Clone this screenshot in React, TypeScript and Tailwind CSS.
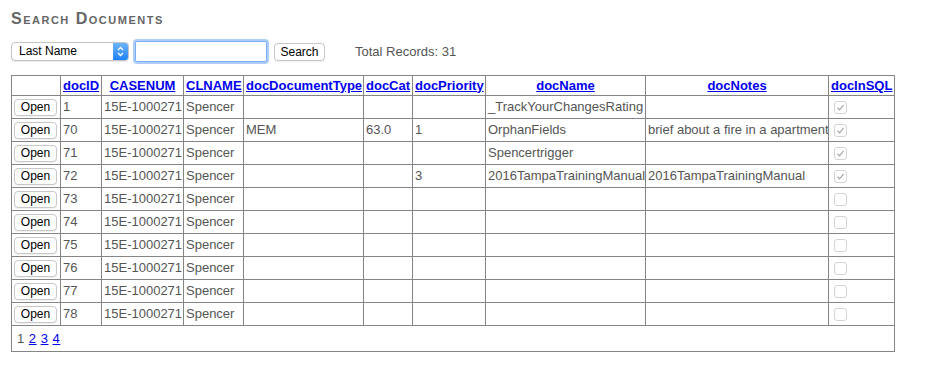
import React from "react";

type Row = {
  id: string;
  type?: string;
  cat?: string;
  pri?: string;
  name?: string;
  notes?: string;
  sql: boolean;
};

const rows: Row[] = [
  { id: "1", name: "_TrackYourChangesRating", sql: true },
  { id: "70", type: "MEM", cat: "63.0", pri: "1", name: "OrphanFields", notes: "brief about a fire in a apartment", sql: true },
  { id: "71", name: "Spencertrigger", sql: true },
  { id: "72", pri: "3", name: "2016TampaTrainingManual", notes: "2016TampaTrainingManual", sql: true },
  { id: "73", sql: false },
  { id: "74", sql: false },
  { id: "75", sql: false },
  { id: "76", sql: false },
  { id: "77", sql: false },
  { id: "78", sql: false },
];

const headers = [
  "docID",
  "CASENUM",
  "CLNAME",
  "docDocumentType",
  "docCat",
  "docPriority",
  "docName",
  "docNotes",
  "docInSQL",
];

const widths = [49, 41, 82, 60, 120, 49, 73, 160, 183, 66];

function CheckBox({ checked }: { checked: boolean }) {
  return (
    <span className="inline-flex w-[13px] h-[13px] rounded-[3px] border border-[#d4d4d4] bg-white items-center justify-center align-middle">
      {checked && (
        <svg width="9" height="9" viewBox="0 0 9 9">
          <path d="M1.5 4.8 L3.6 6.8 L7.6 1.8" fill="none" stroke="#a8a8a8" strokeWidth="1.2" />
        </svg>
      )}
    </span>
  );
}

export default function App() {
  const cell = "border border-[#858585] px-[2px] text-[13px] leading-[16px] text-[#555] whitespace-nowrap overflow-hidden";
  return (
    <div className="min-h-[387px] bg-white pl-[11px]" style={{ fontFamily: "'Liberation Sans', Arial, sans-serif" }}>
      <div
        className="pt-[9px] h-[29px] leading-[20px] text-[16px] font-bold text-[#666] tracking-[1.5px]"
        style={{ fontVariant: "small-caps" }}
      >
        Search Documents
      </div>
      <div className="mt-[12px] h-[21px] flex items-center">
        <div className="w-[118px] h-[19px] flex rounded-[4px] border border-[#c4c4c4] bg-white shadow-[0_1px_1px_rgba(0,0,0,0.08)] overflow-hidden">
          <div className="flex-1 text-[12px] leading-[17px] pl-[7px] text-black">Last Name</div>
          <div className="w-[15px] bg-gradient-to-b from-[#6cb3fa] to-[#1a82fb] flex items-center justify-center">
            <svg width="7" height="11" viewBox="0 0 7 11">
              <path d="M1 4 L3.5 1.5 L6 4 M1 7 L3.5 9.5 L6 7" fill="none" stroke="white" strokeWidth="1.3" />
            </svg>
          </div>
        </div>
        <div className="ml-[6px] w-[132px] h-[21px] rounded-[2px] border border-[#7aaff5] bg-white shadow-[0_0_0_2px_rgba(110,166,240,0.55)]" />
        <div className="ml-[7px] w-[51px] h-[18px] rounded-[4px] border border-[#c8c8c8] bg-white text-[12px] leading-[16px] text-black flex items-center justify-center shadow-[0_1px_1px_rgba(0,0,0,0.06)]">
          Search
        </div>
        <div className="ml-[30px] text-[13px] text-[#555]">Total Records: 31</div>
      </div>
      <table className="mt-[13px] border-collapse table-fixed border border-[#858585]" style={{ width: 883 }}>
        <colgroup>
          {widths.map((w, i) => (
            <col key={i} style={{ width: w }} />
          ))}
        </colgroup>
        <thead>
          <tr className="h-[20px]">
            <th className="border border-[#858585]"></th>
            {headers.map((h) => (
              <th key={h} className="border border-[#858585] px-[2px] text-center text-[13px] leading-[16px] font-bold whitespace-nowrap">
                <a className="text-[#0000ee] underline">{h}</a>
              </th>
            ))}
          </tr>
        </thead>
        <tbody>
          {rows.map((r) => (
            <tr key={r.id} className="h-[23px]">
              <td className="border border-[#858585] px-[2px] leading-[16px]">
                <div className="w-[43px] h-[17px] rounded-[4px] border border-[#c8c8c8] bg-white text-[12px] leading-[15px] text-black flex items-center justify-center shadow-[0_1px_1px_rgba(0,0,0,0.06)]">
                  Open
                </div>
              </td>
              <td className={cell}>{r.id}</td>
              <td className={cell}>15E-1000271</td>
              <td className={cell}>Spencer</td>
              <td className={cell}>{r.type}</td>
              <td className={cell}>{r.cat}</td>
              <td className={cell}>{r.pri}</td>
              <td className={cell}>{r.name}</td>
              <td className={cell}>{r.notes}</td>
              <td className="border border-[#858585] pl-[5px] leading-[16px]">
                <CheckBox checked={r.sql} />
              </td>
            </tr>
          ))}
          <tr className="h-[26px]">
            <td colSpan={10} className="border border-[#858585] px-[5px] text-[13px] leading-[16px] text-[#555] tracking-[0.5px]">
              <span>1</span>{" "}
              <a className="text-[#0000ee] underline">2</a>{" "}
              <a className="text-[#0000ee] underline">3</a>{" "}
              <a className="text-[#0000ee] underline">4</a>
            </td>
          </tr>
        </tbody>
      </table>
    </div>
  );
}
